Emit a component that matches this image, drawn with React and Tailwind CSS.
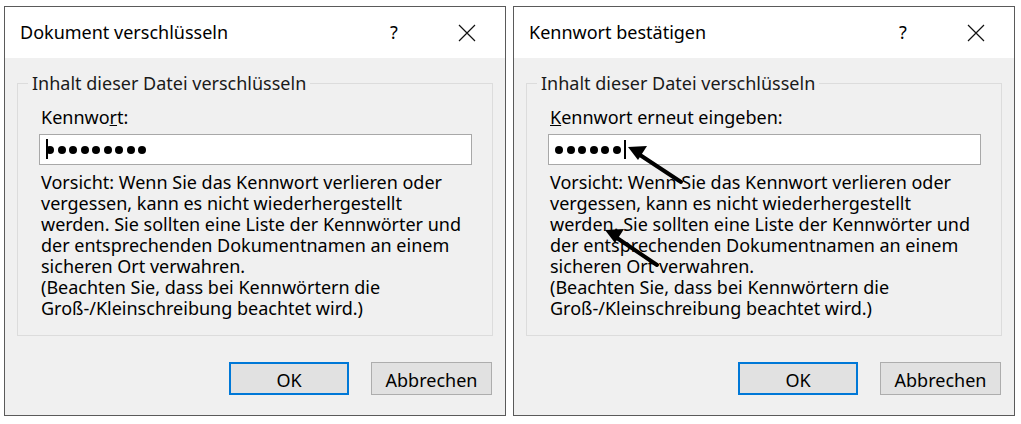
import React from "react";

const font = { fontFamily: '"Noto Sans", "Open Sans", Arial, sans-serif' };

function Dots({ count }) {
  return (
    <div className="flex items-center gap-[3.5px]">
      {Array.from({ length: count }).map((_, i) => (
        <span key={i} className="block w-[8px] h-[8px] rounded-full bg-black" />
      ))}
    </div>
  );
}

function Dialog({ title, label, password }) {
  return (
    <div className="w-[502px] h-[410px] border border-[#5a5a5a] flex flex-col bg-[#f0f0f0]">
      {/* title bar */}
      <div className="h-[51px] bg-white flex items-center pl-[15px] shrink-0">
        <span className="text-[18px] text-black flex-1 -mt-[1px]">{title}</span>
        <span className="text-[18px] text-black w-[20px] text-center mr-[54px] -mt-[1px]">?</span>
        <svg className="w-[18px] h-[18px] mr-[29px]" viewBox="0 0 18 18" fill="none" stroke="#111" strokeWidth="1.2">
          <path d="M1 1 L17 17 M17 1 L1 17" />
        </svg>
      </div>

      <div className="flex-1 flex flex-col pt-[14px] px-[12px]">
        <fieldset className="border border-[#dcdcdc] pl-[23px] pr-[20px] pt-[12px] pb-[16px] m-0">
          <legend className="text-[18px] leading-[22px] text-[#1a1a1a] px-[4px] -ml-[13px] -mt-[1px]">
            Inhalt dieser Datei verschlüsseln
          </legend>
          <div className="text-[18px] leading-[22px] text-black">{label}</div>
          <div className="-ml-[2px] mt-[6px] w-[433px] h-[31px] bg-white border border-[#a8a8a8] flex items-center pl-[6px]">
            {password}
          </div>
          <p className="mt-[7px] text-[18px] leading-[21px] text-black whitespace-nowrap">
            Vorsicht: Wenn Sie das Kennwort verlieren oder<br />
            vergessen, kann es nicht wiederhergestellt<br />
            werden. Sie sollten eine Liste der Kennwörter und<br />
            der entsprechenden Dokumentnamen an einem<br />
            sicheren Ort verwahren.<br />
            (Beachten Sie, dass bei Kennwörtern die<br />
            Groß-/Kleinschreibung beachtet wird.)
          </p>
        </fieldset>

        <div className="flex justify-end gap-[22px] mt-[26px] pr-[1px]">
          <button className="w-[120px] h-[33px] bg-[#e1e1e1] border-2 border-[#0078d7] text-[18px] leading-none text-black pt-[2px]">
            OK
          </button>
          <button className="w-[121px] h-[33px] bg-[#e1e1e1] border border-[#adadad] text-[18px] leading-none text-black pt-[2px]">
            Abbrechen
          </button>
        </div>
      </div>
    </div>
  );
}

export default function App() {
  return (
    <div className="relative w-[1021px] h-[424px] bg-white pl-[4px] pt-[6px] flex gap-[7px]" style={font}>
      <Dialog
        title="Dokument verschlüsseln"
        label={<>Kennwo<span className="underline">r</span>t:</>}
        password={
          <div className="relative">
            <Dots count={9} />
            <span className="absolute left-0 top-[-7px] w-[1.5px] h-[20px] bg-black" />
          </div>
        }
      />
      <Dialog
        title="Kennwort bestätigen"
        label={<><span className="underline">K</span>ennwort erneut eingeben:</>}
        password={
          <div className="flex items-center">
            <Dots count={6} />
            <span className="ml-[3px] w-[2px] h-[19px] bg-black" />
          </div>
        }
      />

      {/* annotation arrows */}
      <svg className="absolute left-0 top-0 pointer-events-none" width="1021" height="424" viewBox="0 0 1021 424">
        <g stroke="#000" strokeWidth="4" strokeLinecap="round">
          <line x1="681" y1="182" x2="640" y2="155" />
          <line x1="657" y1="265" x2="617" y2="238" />
        </g>
        <polygon points="628,147 647,146 638,160" fill="#000" />
        <polygon points="605,230 624,229 615,243" fill="#000" />
      </svg>
    </div>
  );
}
